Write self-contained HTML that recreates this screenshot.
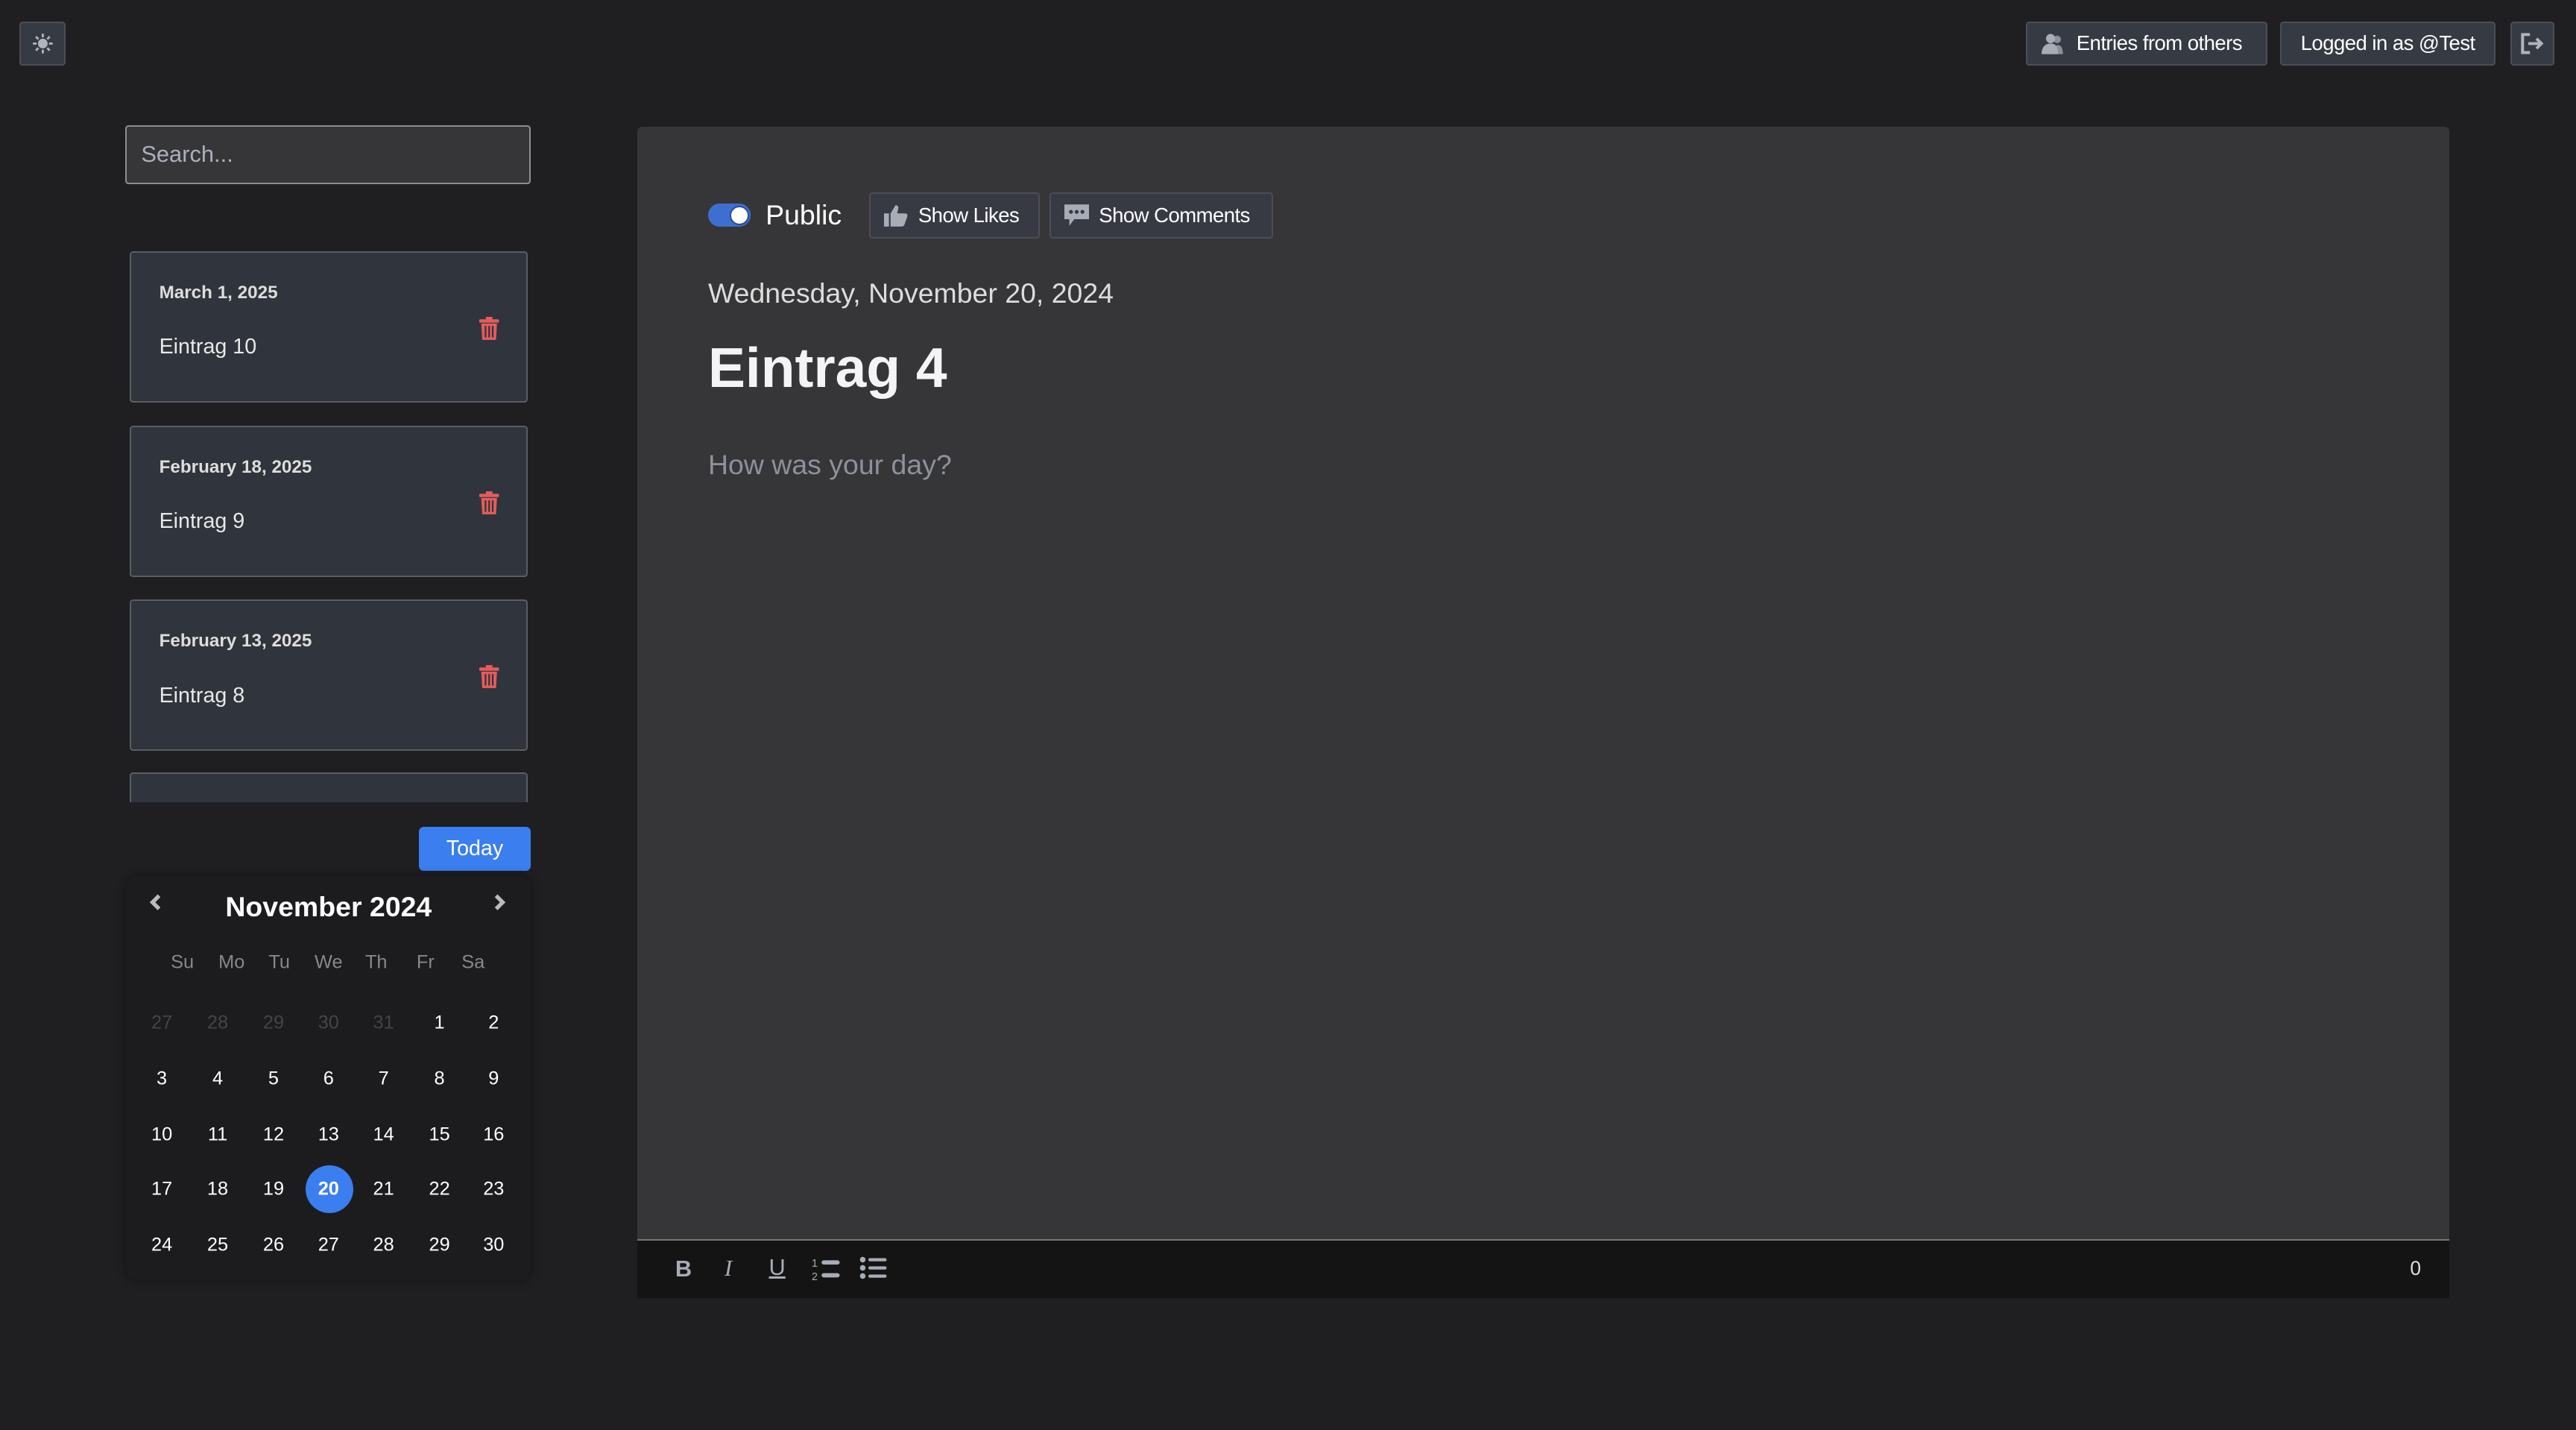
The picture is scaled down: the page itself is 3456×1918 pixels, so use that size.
<!DOCTYPE html>
<html><head><meta charset="utf-8"><style>
html,body{margin:0;padding:0;background:#1f1f21;overflow:hidden}
#w{zoom:2.2041;width:1568px;height:870px;position:relative;font-family:"Liberation Sans",sans-serif;color:#fff}
.a{position:absolute}
.btn{position:absolute;background:#363a43;border:1px solid #4a4e57;border-radius:2px;color:#fff;font-size:13px;box-sizing:border-box;display:flex;align-items:center}
.tb{font-size:12.5px;letter-spacing:-0.25px}
.card{position:absolute;left:79px;width:242px;height:92px;background:#30343c;border:1px solid #5a5d63;border-radius:2px;box-sizing:border-box}
.card .d{position:absolute;left:17px;top:18px;font-size:11px;font-weight:bold;color:#ddd}
.card .t{position:absolute;left:17px;top:50px;font-size:13px;color:#e8e8e8}
.card svg{position:absolute;left:212px;top:39px}
.cal{position:absolute;left:77px;top:533px;width:246px;height:246px;background:#1c1c1e;border-radius:6px;box-shadow:0 0 6px rgba(0,0,0,.4)}
.c{position:absolute;width:30px;text-align:center;font-size:11.5px;color:#fff;transform:translate(-15px,-7px)}
.h{color:#888}
.g{color:#444}
</style></head><body><div id="w">
<div class="btn" style="left:12px;top:13px;width:28px;height:27px;justify-content:center"><svg width="14" height="14" viewBox="0 0 14 14" stroke="#b0b4bd" stroke-width="1.3" fill="none"><circle cx="7" cy="7" r="2.3" fill="#b0b4bd"/><path d="M7 1v2.2M7 10.8V13M1 7h2.2M10.8 7H13M2.8 2.8l1.5 1.5M9.7 9.7l1.5 1.5M2.8 11.2l1.5-1.5M9.7 4.3l1.5-1.5"/></svg></div>
<div class="btn tb" style="left:1233px;top:13px;width:147px;height:27px;padding-left:9px"><svg width="15" height="13" viewBox="0 0 15 13" fill="#a8acb6" style="margin-right:6px"><circle cx="9.5" cy="4" r="2.3" opacity=".75"/><path d="M7 13c0-3.5 1-5.5 3-5.5s3 2 3 5.5z" opacity=".75"/><circle cx="5.5" cy="3.5" r="2.8"/><path d="M0 13c0-4 2-6.5 5.5-6.5S10 9 10 13z"/></svg>Entries from others</div>
<div class="btn tb" style="left:1388px;top:13px;width:131px;height:27px;justify-content:center">Logged in as @Test</div>
<div class="btn" style="left:1528px;top:13px;width:27px;height:27px;justify-content:center"><svg width="15" height="14" viewBox="0 0 15 14" fill="none" stroke="#b0b4bd" stroke-width="1.8"><path d="M6 1.5H1.5v11H6M5 7h8M10 4l3 3-3 3"/></svg></div>

<div class="a" style="left:76px;top:76px;width:247px;height:36px;box-sizing:border-box;background:#363638;border:1px solid #8a8e96;border-radius:2px;font-size:14px;color:#aab0bc;padding:9px 0 0 9px">Search...</div>

<div class="card" style="top:153px"><div class="d">March 1, 2025</div><div class="t">Eintrag 10</div><svg width="12" height="14" viewBox="0 0 12 14" fill="#e45c5c"><rect x="0" y="1.5" width="12" height="2" rx=".5"/><rect x="4" y="0" width="4" height="2"/><path d="M1.2 4h9.6l-.6 10H1.8z"/><path d="M3.8 5.5v7M6 5.5v7M8.2 5.5v7" stroke="#30343c" stroke-width="1"/></svg></div>
<div class="card" style="top:259px"><div class="d">February 18, 2025</div><div class="t">Eintrag 9</div><svg width="12" height="14" viewBox="0 0 12 14" fill="#e45c5c"><rect x="0" y="1.5" width="12" height="2" rx=".5"/><rect x="4" y="0" width="4" height="2"/><path d="M1.2 4h9.6l-.6 10H1.8z"/><path d="M3.8 5.5v7M6 5.5v7M8.2 5.5v7" stroke="#30343c" stroke-width="1"/></svg></div>
<div class="card" style="top:365px"><div class="d">February 13, 2025</div><div class="t">Eintrag 8</div><svg width="12" height="14" viewBox="0 0 12 14" fill="#e45c5c"><rect x="0" y="1.5" width="12" height="2" rx=".5"/><rect x="4" y="0" width="4" height="2"/><path d="M1.2 4h9.6l-.6 10H1.8z"/><path d="M3.8 5.5v7M6 5.5v7M8.2 5.5v7" stroke="#30343c" stroke-width="1"/></svg></div>
<div class="card" style="top:470px;height:18px;border-bottom:none;border-radius:2px 2px 0 0"></div>

<div class="a" style="left:255px;top:503px;width:68px;height:27px;background:#3b7ef0;border-radius:3px;font-size:13px;text-align:center;line-height:27px">Today</div>

<div class="cal">
<svg class="a" style="left:13px;top:10px" width="10" height="12" viewBox="0 0 10 12"><path d="M7 2L3 6l4 4" stroke="#bbb" stroke-width="2.4" fill="none"/></svg>
<svg class="a" style="left:222px;top:10px" width="10" height="12" viewBox="0 0 10 12"><path d="M3 2l4 4-4 4" stroke="#bbb" stroke-width="2.4" fill="none"/></svg>
<div class="a" style="left:0;width:246px;top:9px;text-align:center;font-size:17px;font-weight:bold">November 2024</div>
</div>
<div class="a" style="left:186px;top:709px;width:29px;height:29px;border-radius:50%;background:#3b7ef0"></div>
<div id="days"></div>
<script>
var xs=[98.5,132.5,166.5,200,233.5,267.5,300.5],ys=[623,657,691,724,758],h=["Su","Mo","Tu","We","Th","Fr","Sa"],s="";
var hx=[111,141,170,200,229,259,288];
h.forEach(function(t,i){s+='<div class="c h" style="left:'+hx[i]+'px;top:586px">'+t+'</div>';});
var d=[27,28,29,30,31];for(var i=1;i<=30;i++)d.push(i);
d.forEach(function(n,k){var r=Math.floor(k/7),c=k%7;var cls=k<5?"c g":"c";var st=(n==20&&k>5)?";font-weight:bold":"";s+='<div class="'+cls+'" style="left:'+xs[c]+'px;top:'+ys[r]+'px'+st+'">'+n+'</div>';});
document.getElementById("days").outerHTML=s;
</script>

<div class="a" style="left:388px;top:77px;width:1103px;height:677px;background:#363638;border-radius:3px 3px 0 0;border-bottom:1px solid #777"></div>
<div class="a" style="left:431px;top:124px;width:26px;height:14px;border-radius:7px;background:#3d6fd0"></div>
<div class="a" style="left:444px;top:125px;width:10px;height:10px;border-radius:50%;background:#fff;border:1px solid #2a4c9a"></div>
<div class="a" style="left:466px;top:121px;font-size:17px;color:#fff">Public</div>
<div class="btn tb" style="left:529px;top:117px;width:104px;height:28px;padding-left:8px;background:#373a43"><svg width="15" height="14" viewBox="0 0 15 14" fill="#a8acb6" style="margin-right:6px"><rect x="0" y="6" width="3" height="8"/><path d="M4 6l3-5c1.5 0 2 1 1.6 2.5L8 6h5c1 0 1.6 1 1.2 2l-1.8 5c-.3.6-.8 1-1.4 1H4z"/></svg>Show Likes</div>
<div class="btn tb" style="left:639px;top:117px;width:136px;height:28px;padding-left:8px;background:#373a43"><svg width="15" height="15" viewBox="0 0 15 15" fill="#a8acb6" style="margin-right:6px"><path d="M0 1h15v9H6l-3 4v-4H0z"/><circle cx="4" cy="5.5" r="1.2" fill="#373a43"/><circle cx="7.5" cy="5.5" r="1.2" fill="#373a43"/><circle cx="11" cy="5.5" r="1.2" fill="#373a43"/></svg>Show Comments</div>
<div class="a" style="left:431px;top:169px;font-size:17px;color:#ddd">Wednesday, November 20, 2024</div>
<div class="a" style="left:431px;top:204px;font-size:34px;font-weight:bold;color:#f4f4f6">Eintrag 4</div>
<div class="a" style="left:431px;top:273px;font-size:17px;color:#8c919b">How was your day?</div>

<div class="a" style="left:388px;top:755px;width:1103px;height:35px;background:#141414"></div>
<div class="a" style="left:411px;top:764px;font-size:14px;font-weight:bold;color:#a8acb6">B</div>
<div class="a" style="left:441px;top:764px;font-size:14px;font-style:italic;font-family:'Liberation Serif',serif;color:#a8acb6">I</div>
<div class="a" style="left:468px;top:763px;font-size:14px;color:#a8acb6;text-decoration:underline">U</div>
<svg class="a" style="left:494px;top:765px" width="18" height="15" viewBox="0 0 18 15" fill="#a8acb6"><text x="0" y="6" font-size="6.5" font-family="Liberation Sans" fill="#a8acb6">1</text><text x="0" y="14" font-size="6.5" font-family="Liberation Sans" fill="#a8acb6">2</text><rect x="6" y="2" width="11" height="2.6" rx="1.3"/><rect x="6" y="9.8" width="11" height="2.6" rx="1.3"/></svg>
<svg class="a" style="left:523px;top:764px" width="17" height="15" viewBox="0 0 17 15" fill="#a8acb6"><circle cx="2" cy="2.5" r="1.7"/><circle cx="2" cy="7.5" r="1.7"/><circle cx="2" cy="12.5" r="1.7"/><rect x="5.5" y="1.6" width="11" height="1.9" rx=".9"/><rect x="5.5" y="6.6" width="11" height="1.9" rx=".9"/><rect x="5.5" y="11.6" width="11" height="1.9" rx=".9"/></svg>
<div class="a" style="left:1467px;top:765px;font-size:12px;color:#ddd">0</div>
</div></body></html>
